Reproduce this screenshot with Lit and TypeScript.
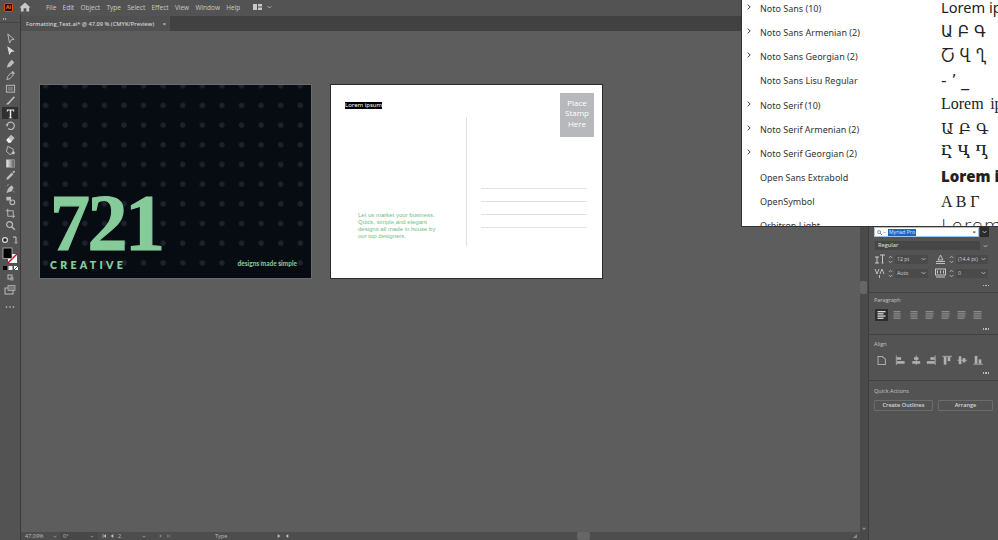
import { LitElement, html, css, svg } from "lit";
import { customElement } from "lit/decorators.js";

const MENUS = ["File", "Edit", "Object", "Type", "Select", "Effect", "View", "Window", "Help"];

const g = "#bdbdbd";
const TOOLS: unknown[] = [
  svg`<path d="M3 1l7 6-3.200.4L5 11z" fill="none" stroke="${g}" stroke-width="1"/>`,
  svg`<path d="M2.500 1l8 6.200-3.600.3L4.600 11z" fill="#d8d8d8"/>`,
  svg`<path d="M2 10.500l1.200-4 4-4.500 3 2.800-4.200 4.600z" fill="${g}"/>`,
  svg`<path d="M2 10.500l1-3.500 3.500-4 2.600 2.400-3.600 4z" fill="none" stroke="${g}"/><path d="M7 2.400l1.400-1.200 2.400 2.300-1.400 1.300z" fill="${g}"/>`,
  svg`<rect x="1.500" y="2.500" width="9" height="7.500" fill="none" stroke="${g}" stroke-width="1"/><rect x="3" y="4" width="6" height="4.500" fill="#767676"/>`,
  svg`<path d="M1.500 10.500c.3-1.600 1-2 1.800-2.300L9.600 1.400l1.200 1.100-6.200 7c-.6.7-1.600 1-3.100 1z" fill="${g}"/>`,
  svg`<path d="M2 1.500h8v2.600h-.7c-.2-1-.6-1.400-1.600-1.400H6.800v7.100c0 .6.3.8 1.200.8v.7H4v-.7c.9 0 1.200-.2 1.200-.8V2.700H4.300c-1 0-1.400.4-1.600 1.400H2z" fill="#e8e8e8"/>`,
  svg`<path d="M2.200 6a4 4 0 1 1 1.300 3.300" fill="none" stroke="${g}" stroke-width="1.200"/><path d="M.6 4.800l3.200.2-1.500 2.400z" fill="${g}"/>`,
  svg`<path d="M1.500 7.500l5-5.500 4 3.400-4.600 5.100H3.800z" fill="${g}"/><path d="M1.500 7.500l2.300 3h2.100l1.400-1.500L3.500 5.300z" fill="#efefef"/>`,
  svg`<path d="M3 1.500l6 3v4l-3.500 2L1.500 7z" fill="none" stroke="${g}"/><circle cx="9" cy="8.500" r="1.800" fill="${g}"/>`,
  svg`<defs><linearGradient id="gr"><stop offset="0" stop-color="#eee"/><stop offset="1" stop-color="#555"/></linearGradient></defs><rect x="1.500" y="2" width="9" height="8" fill="url(#gr)" stroke="${g}" stroke-width=".6"/>`,
  svg`<path d="M1.500 10.500l.5-2.300L7.400 2.800l1.800 1.800-5.400 5.400zM8 1.900l1-.9c.5-.3 1-.2 1.400.2s.5 1 .1 1.400l-.9 1z" fill="${g}"/>`,
  svg`<path d="M2 10.500c1-3.500 2.500-6 5-7.500l2 2-2 4-3 .5zM2 3l2-1.500M9 9l1.500 1" fill="${g}" stroke="${g}" stroke-width=".7"/>`,
  svg`<rect x="1.500" y="2" width="5" height="4" fill="${g}"/><circle cx="8" cy="8" r="2.600" fill="none" stroke="${g}" stroke-width="1.200"/><path d="M5 5l2 2" stroke="${g}"/>`,
  svg`<path d="M3 .8V9h8M.8 3H9v8" fill="none" stroke="${g}" stroke-width="1"/>`,
  svg`<circle cx="5" cy="5" r="3.200" fill="none" stroke="${g}" stroke-width="1.300"/><path d="M7.300 7.300l3.400 3.400" stroke="${g}" stroke-width="1.500"/>`,
];

const FONTS = [
  { n: "Noto Sans (10)", c: true, p: "Lorem ipsum", k: "nt up" },
  { n: "Noto Sans Armenian (2)", c: true, p: "Ա Բ Գ", k: "ns" },
  { n: "Noto Sans Georgian (2)", c: true, p: "Ⴀ Ⴁ Ⴂ", k: "ns" },
  { n: "Noto Sans Lisu Regular", c: false, p: "- ’ _", k: "ns" },
  { n: "Noto Serif (10)", c: true, p: "Lorem ipsum", k: "ls up wide" },
  { n: "Noto Serif Armenian (2)", c: true, p: "Ա Բ Գ", k: "se" },
  { n: "Noto Serif Georgian (2)", c: true, p: "Ⴀ Ⴁ Ⴂ", k: "se" },
  { n: "Open Sans Extrabold", c: false, p: "Lorem ipsum", k: "xb up" },
  { n: "OpenSymbol", c: false, p: "Α Β Γ", k: "ls" },
  { n: "Orbitron Light", c: false, p: "Lorem ipsum", k: "or" },
];

const p = "#b0b0b0";
const PARA = [
  [0, 0, 0, 0], [1, 1, 1, 1], [1, 1, 1, 1], [0, 0, 0, 1], [0, 0, 0, 1], [0, 0, 0, 1], [0, 0, 0, 0],
];
const ALIGN = [
  svg`<path d="M1.500 .5v11" stroke="${p}"/><rect x="2" y="2.500" width="5" height="3" fill="${p}"/><rect x="2" y="7" width="9" height="3" fill="${p}"/>`,
  svg`<path d="M6 .5v11" stroke="${p}"/><rect x="3.500" y="2.500" width="5" height="3" fill="${p}"/><rect x="1.500" y="7" width="9" height="3" fill="${p}"/>`,
  svg`<path d="M10.500 .5v11" stroke="${p}"/><rect x="5" y="2.500" width="5" height="3" fill="${p}"/><rect x="1" y="7" width="9" height="3" fill="${p}"/>`,
  svg`<path d="M.5 1.500h11" stroke="${p}"/><rect x="2" y="2" width="3" height="9" fill="${p}"/><rect x="6.500" y="2" width="3" height="5" fill="${p}"/>`,
  svg`<path d="M.5 6h11" stroke="${p}"/><rect x="2" y="1.500" width="3" height="9" fill="${p}"/><rect x="6.500" y="3.500" width="3" height="5" fill="${p}"/>`,
  svg`<path d="M.5 10.500h11" stroke="${p}"/><rect x="2" y="1" width="3" height="9" fill="${p}"/><rect x="6.500" y="5" width="3" height="5" fill="${p}"/>`,
];

const chev = html`<svg class="chev" viewBox="0 0 8 5"><path d="M1 1l3 3 3-3" fill="none" stroke="currentColor" stroke-width="1.200"/></svg>`;
const spin = html`<svg class="spin" viewBox="0 0 5 9"><path d="M.8 3L2.500 1.200 4.200 3M.8 6l1.700 1.800L4.200 6" fill="none" stroke="#bdbdbd" stroke-width=".8"/></svg>`;
const tri = (d: string, c = "#bdbdbd") => html`<svg class="tri" viewBox="0 0 6 6"><path d="${d}" fill="${c}"/></svg>`;

@customElement("app-root")
export class AppRoot extends LitElement {
  static styles = css`
    :host {
      display: block;
      position: relative;
      width: 998px;
      height: 540px;
      overflow: hidden;
      background: #5d5d5d;
      font-family: "Open Sans", "Noto Sans", sans-serif;
      color: #cfcfcf;
    }
    .menubar {
      height: 14px;
      background: #535353;
      display: flex;
      align-items: center;
      font-size: 6.500px;
      color: #c9c9c9;
    }
    .ai {
      width: 7px;
      height: 7px;
      margin-left: 4px;
      background: #2c0a02;
      border: 1px solid #e2461a;
      border-radius: 1px;
      color: #ff7a3c;
      font-size: 5px;
      line-height: 7px;
      text-align: center;
      font-weight: 700;
    }
    .home { width: 12px; height: 10px; margin-left: 6px; }
    .menus { display: flex; gap: 6.300px; margin-left: 15px; }
    .workspace { display: flex; align-items: center; gap: 5px; margin-left: 13px; }
    .workspace .wsicon { width: 9px; height: 6px; display: block; }
    .workspace .chev { width: 5px; height: 4px; }
    .main { display: flex; height: 526px; }
    .toolbar {
      width: 20px;
      flex: none;
      background: #535353;
      border-right: 1px solid #3a3a3a;
      display: flex;
      flex-direction: column;
      align-items: center;
    }
    .grip { width: 100%; border-bottom: 1px solid #444; display: flex; gap: 1px; padding: 4px 0 0 3px; box-sizing: border-box; height: 9px; }
    .grip i { width: 1px; height: 2px; background: #aaa; display: block; }
    .tools { display: flex; flex-direction: column; margin-top: 8.750px; align-items: center; }
    .tool {
      width: 14px;
      height: 12.500px;
      display: flex;
      align-items: center;
      justify-content: center;
    }
    .tool.on { background: #2f2f2f; width: 16px; }
    .tool svg { width: 11px; height: 11px; }
    .swatches { width: 20px; height: 80px; display: block; }
    .stack { flex: 1; display: flex; flex-direction: column; min-width: 0; }
    .tabbar { height: 17px; background: #414141; border-top: 2px solid #535353; display: flex; box-sizing: border-box; }
    .tab {
      width: 149px;
      background: #505050;
      font-size: 5.700px;
      font-weight: 600;
      color: #d0d0d0;
      display: flex;
      align-items: center;
      justify-content: space-between;
      padding: 0 4px 0 5px;
      box-sizing: border-box;
      white-space: nowrap;
    }
    .canvas-row { flex: 1; display: flex; min-height: 0; }
    .canvas-col { flex: 1; display: flex; flex-direction: column; min-width: 0; }
    .canvas {
      flex: 1;
      background: #5d5d5d;
      display: flex;
      align-items: flex-start;
      gap: 18px;
      padding: 53px 0 0 18px;
      box-sizing: border-box;
    }
    .artboard {
      position: relative;
      width: 273px;
      height: 195px;
      flex: none;
      border: 1px solid #2b2b2b;
      box-sizing: border-box;
      overflow: hidden;
    }
    .dark {
      background-color: #070c13;
      background-image: radial-gradient(circle, #1c232c 0, #1c232c 2.200px, transparent 3.200px);
      background-size: 19.600px 19.700px;
      background-position: -4.200px -9.150px;
      border-color: #6b6b6b;
    }
    .big {
      position: absolute;
      left: 10px;
      top: 108px;
      font: 700 80px/60px "Liberation Serif", serif;
      letter-spacing: -2.500px;
      color: #86cc9a;
      -webkit-text-stroke: 1.200px #86cc9a;
    }
    .creative {
      position: absolute;
      left: 10px;
      top: 174.500px;
      font: 800 10.500px/10px Lato, sans-serif;
      letter-spacing: 3.300px;
      color: #86cc9a;
    }
    .slogan {
      position: absolute;
      right: 14px;
      top: 176px;
      font: 700 6.500px/1 Lato, sans-serif;
      color: #86cc9a;
    }
    .white { background: #fff; }
    .lorem {
      position: absolute;
      left: 14px;
      top: 17px;
      background: #000;
      color: #fff;
      font: 6px/7px "Noto Sans", sans-serif;
      white-space: nowrap;
    }
    .stamp {
      position: absolute;
      left: 229px;
      top: 8px;
      width: 34px;
      height: 44px;
      background: #b7b8bb;
      color: #fff;
      font: 8px/10.500px "Open Sans", sans-serif;
      text-align: center;
      padding-top: 4.500px;
      box-sizing: border-box;
    }
    .vline { position: absolute; left: 135px; top: 32px; height: 129px; width: 1px; background: #e0e0e0; }
    .hline { position: absolute; left: 150px; width: 106px; height: 1px; background: #e2e2e2; }
    .promo {
      position: absolute;
      left: 27px;
      top: 126.500px;
      font: 6px/7.300px "Liberation Sans", sans-serif;
      color: #6fbd87;
      white-space: nowrap;
    }
    .vscroll { width: 8px; flex: none; background: #4a4a4a; position: relative; display: flex; flex-direction: column; justify-content: flex-end; align-items: center; padding-bottom: 9px; box-sizing: border-box; }
    .thumb { position: absolute; left: 0; top: 250px; width: 7px; height: 13px; background: #666; border-radius: 2px; }
    .tri { width: 4px; height: 4px; flex: none; display: block; }
    .statusbar {
      height: 8px;
      background: #4d4d4d;
      display: flex;
      align-items: center;
      font-size: 5.500px;
      line-height: 7px;
      color: #bdbdbd;
      overflow: hidden;
    }
    .statusbar .st { display: flex; align-items: center; height: 8px; box-sizing: border-box; flex: none; }
    .statusbar .chev { width: 4px; height: 3px; }
    .st-zoom { width: 32px; margin-left: 4px; justify-content: space-between; }
    .st-rot { width: 38px; margin-left: 3px; justify-content: space-between; background: #474747; padding: 0 4px 0 3px; }
    .st-art { width: 52px; margin-left: 3px; gap: 4px; padding-left: 1px; }
    .st-art .chev { margin-left: 17px; }
    .st-next { width: 24px; gap: 4px; padding-left: 6px; }
    .st-tool { width: 62px; margin-left: 38px; }
    .st-arr { gap: 4px; width: 20px; }
    .hthumb { width: 13px; height: 8px; background: #666; border-radius: 2px; margin-left: 280px; flex: none; }
    .corner { margin-left: auto; margin-right: 3px; }
    .panel {
      width: 130px;
      flex: none;
      background: #535353;
      border-left: 1px solid #3d3d3d;
      box-sizing: border-box;
      padding-top: 213px;
      font-size: 5.500px;
    }
    .searchrow { display: flex; align-items: center; gap: 1px; padding-left: 5px; height: 10px; }
    .search {
      width: 105px;
      height: 10px;
      background: #fff;
      display: flex;
      align-items: center;
      color: #555;
      border: 1px solid #9fc4e8;
      box-sizing: border-box;
      padding: 0 2px;
    }
    .search .mg { width: 5px; height: 5px; flex: none; }
    .search .chev { width: 3px; height: 3px; color: #555; margin: 0 1px; flex: none; }
    .sel { background: #1f62c4; color: #dfe9f7; font-size: 5.100px; line-height: 7px; padding: 0 1px; margin-left: 1px; }
    .x { margin-left: auto; font-size: 6px; font-weight: 700; color: #444; line-height: 7px; }
    .drop {
      width: 9px;
      height: 10px;
      background: #2c2c2c;
      color: #ddd;
      display: flex;
      align-items: center;
      justify-content: center;
    }
    .drop .chev, .style .chev, .fld .chev { width: 5px; height: 4px; flex: none; }
    .style { display: flex; align-items: center; margin: 4px 0 0 6px; gap: 3px; }
    .style .f {
      width: 105px;
      height: 9px;
      background: #464646;
      font-size: 5.500px;
      line-height: 9px;
      padding-left: 3px;
      box-sizing: border-box;
      font-weight: 600;
    }
    .metrics {
      display: grid;
      grid-template-columns: 54px 53px;
      column-gap: 7px;
      row-gap: 4px;
      margin: 4px 0 0 5px;
    }
    .m { display: flex; align-items: center; height: 10px; }
    .m .gl { width: 11px; height: 10px; flex: none; }
    .spin { width: 5px; height: 9px; flex: none; margin: 0 2px 0 3px; }
    .fld {
      flex: 1;
      height: 9px;
      background: #4a4a4a;
      display: flex;
      align-items: center;
      justify-content: space-between;
      padding: 0 2px;
      box-sizing: border-box;
      font-size: 5.200px;
      white-space: nowrap;
    }
    .more {
      display: flex;
      justify-content: flex-end;
      padding-right: 9px;
      height: 5px;
      gap: 1px;
      align-items: center;
    }
    .more i { width: 1.500px; height: 1.500px; background: #bbb; display: block; }
    .m5 { margin-top: 5px; }
    .sect { border-top: 1px solid #414141; padding-left: 5px; box-sizing: border-box; }
    .sect h4 { margin: 0; font-size: 5.500px; font-weight: 400; color: #c4c4c4; line-height: 7px; }
    .s-para { margin-top: 4px; height: 42px; padding-top: 3.500px; }
    .s-para .row { margin: 5.500px 0 5.500px 1px; }
    .s-align { height: 46px; padding-top: 5.500px; }
    .s-align .row { margin: 6.500px 0 4.500px 3px; }
    .s-quick { padding-top: 6.500px; }
    .row { display: flex; align-items: center; height: 12px; }
    .pbtn { width: 13px; height: 12px; display: flex; align-items: center; justify-content: center; margin-right: 3px; flex: none; }
    .pbtn.on { background: #2e2e2e; }
    .pbtn svg { width: 9px; height: 8px; }
    .abtn { width: 10.500px; height: 10.500px; margin-right: 5.100px; flex: none; }
    .afirst { margin-right: 7.500px; }
    .btns { display: flex; gap: 5px; margin-top: 5.500px; }
    .btn {
      height: 11px;
      border: 1px solid #6c6c6c;
      border-radius: 1px;
      box-sizing: border-box;
      font-size: 5.600px;
      line-height: 9px;
      text-align: center;
      font-weight: 600;
      color: #d5d5d5;
    }
    .b1 { width: 59px; }
    .b2 { width: 55px; }
    .fontlist {
      position: absolute;
      left: 741px;
      top: 0;
      width: 257px;
      height: 227px;
      background: #fff;
      border-left: 1px solid #333;
      border-bottom: 1px solid #333;
      box-sizing: border-box;
      overflow: hidden;
      color: #222;
    }
    .fr {
      display: grid;
      grid-template-columns: 18px 181px 1fr;
      height: 24.200px;
      align-items: center;
      white-space: nowrap;
    }
    .list { margin-top: -3.800px; }
    .arrow { width: 4px; height: 6px; margin: -3px 0 0 5px; }
    .fname { font: 9px/1 "Noto Sans", sans-serif; color: #333; }
    .prev { font-size: 15.500px; line-height: 24px; overflow: hidden; color: #222; }
    .up { margin-top: -3px; }
    .wide { word-spacing: 2.500px; }
    .nt { font-family: "Noto Sans", sans-serif; font-size: 14.600px; }
    .ns { font-family: "DejaVu Sans", sans-serif; }
    .se { font-family: "DejaVu Serif", serif; }
    .ls { font-family: "Liberation Serif", serif; font-size: 16px; }
    .xb { font-family: "Open Sans", sans-serif; font-weight: 800; font-size: 15px; }
    .or { font-family: "DejaVu Sans", sans-serif; font-weight: 300; font-size: 18px; letter-spacing: 1px; }
  `;

  private more() {
    return html`<div class="more"><i></i><i></i><i></i></div>`;
  }

  render() {
    return html`
      <div class="menubar">
        <div class="ai">Ai</div>
        <svg class="home" viewBox="0 0 13 11"><path d="M6.500 .5L12.500 6H11v4.500H8V7H5v3.500H2V6H.5z" fill="#c8c8c8"/></svg>
        <div class="menus">${MENUS.map((m) => html`<span>${m}</span>`)}</div>
        <div class="workspace">
          <svg class="wsicon" viewBox="0 0 9 6"><rect width="4" height="6" fill="#c8c8c8"/><rect x="5" width="4" height="2.500" fill="#c8c8c8"/><rect x="5" y="3.500" width="4" height="2.500" fill="#c8c8c8"/></svg>
          ${chev}
        </div>
      </div>
      <div class="main">
        <div class="toolbar">
          <div class="grip"><i></i><i></i></div>
          <div class="tools">
            ${TOOLS.map(
              (ic, i) => html`<div class="tool ${i === 6 ? "on" : ""}"><svg viewBox="0 0 12 12">${ic}</svg></div>`,
            )}
          </div>
          <svg class="swatches" viewBox="0 0 20 80">
            <circle cx="5" cy="8" r="3" fill="#ddd"/><circle cx="5" cy="8" r="1.800" fill="#222"/>
            <path d="M13 5h3v5M14.500 10l1.500 1.500L17.500 10" fill="none" stroke="#ccc" stroke-width="1"/>
            <rect x="8" y="22" width="9" height="9" fill="#fff"/><path d="M8 31l9-9" stroke="#c3122a" stroke-width="1.500"/>
            <rect x="3" y="16" width="9" height="10.500" fill="#000" stroke="#bbb" stroke-width=".8"/>
            <rect x="3" y="34" width="4" height="4" fill="#000"/><rect x="8.500" y="34" width="4" height="4" fill="#eee"/>
            <rect x="14" y="34" width="4" height="4" fill="#fff"/><path d="M14 38l4-4" stroke="#c3122a"/>
            <rect x="8" y="43" width="4" height="4" fill="none" stroke="#bbb"/><rect x="10" y="45" width="3.500" height="3.500" fill="#999"/>
            <rect x="5" y="56" width="8" height="6" fill="none" stroke="#bbb"/><rect x="8" y="53.500" width="7" height="5" fill="#777" stroke="#bbb" stroke-width=".7"/>
            <circle cx="6.500" cy="75" r=".8" fill="#ccc"/><circle cx="10" cy="75" r=".8" fill="#ccc"/><circle cx="13.500" cy="75" r=".8" fill="#ccc"/>
          </svg>
        </div>
        <div class="stack">
          <div class="tabbar">
            <div class="tab"><span>Formatting_Text.ai* @ 47.09 % (CMYK/Preview)</span><span>×</span></div>
          </div>
          <div class="canvas-row">
            <div class="canvas-col">
              <div class="canvas">
                <div class="artboard dark">
                  <div class="big">721</div>
                  <div class="creative">CREATIVE</div>
                  <div class="slogan">designs made simple</div>
                </div>
                <div class="artboard white">
                  <div class="lorem">Lorem ipsum</div>
                  <div class="stamp">Place<br />Stamp<br />Here</div>
                  <div class="vline"></div>
                  <div class="hline" style="top:103px"></div>
                  <div class="hline" style="top:116px"></div>
                  <div class="hline" style="top:129px"></div>
                  <div class="hline" style="top:142px"></div>
                  <div class="promo">Let us market your business.<br />Quick, simple,and elegant<br />designs all made in house by<br />our top designers.</div>
                </div>
              </div>
              <div class="statusbar">
                <div class="st st-zoom"><span>47.09%</span>${chev}</div>
                <div class="st st-rot"><span>0°</span>${chev}</div>
                <div class="st st-art">${tri("M1 0h1v6H1zM6 0v6L2.500 3z")}${tri("M5 0v6L1 3z")}<span>2</span>${chev}</div>
                <div class="st st-next">${tri("M1 0v6l4-3z", "#777")}${tri("M0 0v6l3.500-3zM4 0h1v6H4z", "#777")}</div>
                <div class="st st-tool"><span>Type</span></div>
                <div class="st st-arr">${tri("M1 0v6l4-3z")}${tri("M5 0v6L1 3z")}</div>
                <div class="hthumb"></div>
                <div class="corner">${tri("M6 0v6H0z", "#8a8a8a")}</div>
              </div>
            </div>
            <div class="vscroll"><div class="thumb"></div>${tri("M0 1h6L3 5z", "#8a8a8a")}</div>
          </div>
        </div>
        <div class="panel">
          <div class="searchrow">
            <div class="search">
              <svg class="mg" viewBox="0 0 6 6"><circle cx="2.500" cy="2.500" r="1.800" fill="none" stroke="#555" stroke-width=".8"/><path d="M4 4l2 2" stroke="#555"/></svg>
              ${chev}
              <span class="sel">Myriad Pro</span>
              <span class="x">×</span>
            </div>
            <div class="drop">${chev}</div>
          </div>
          <div class="style"><div class="f">Regular</div>${chev}</div>
          <div class="metrics">
            <div class="m">
              <svg class="gl" viewBox="0 0 11 10"><path d="M1 9h4M3 9V3M1 3h4M6 1h5M8.500 1v8M7.500 9h2" fill="none" stroke="#c8c8c8" stroke-width="1"/></svg>
              ${spin}<div class="fld"><span>12 pt</span>${chev}</div>
            </div>
            <div class="m">
              <svg class="gl" viewBox="0 0 11 10"><path d="M5.500 1L3 6h5zM1 9.500h9M1 7.500h9" fill="none" stroke="#c8c8c8" stroke-width=".9"/></svg>
              ${spin}<div class="fld"><span>(14.4 pt)</span>${chev}</div>
            </div>
            <div class="m">
              <svg class="gl" viewBox="0 0 11 10"><path d="M1 1l2 5 2-5M6 6l2-5 2 5M5.500 7v3" fill="none" stroke="#c8c8c8" stroke-width=".9"/></svg>
              ${spin}<div class="fld"><span>Auto</span>${chev}</div>
            </div>
            <div class="m">
              <svg class="gl" viewBox="0 0 11 10"><rect x=".5" y="1" width="10" height="6" fill="none" stroke="#c8c8c8"/><path d="M2.500 2.500v3M5.500 2.500v3M8.500 2.500v3M1 9h9" stroke="#c8c8c8"/></svg>
              ${spin}<div class="fld"><span>0</span>${chev}</div>
            </div>
          </div>
          <div class="m5">${this.more()}</div>
          <div class="sect s-para">
            <h4>Paragraph</h4>
            <div class="row">
              ${PARA.map(
                (r, i) => html`<div class="pbtn ${i === 0 ? "on" : ""}"><svg viewBox="0 0 8 8">
                  ${[0, 1, 2, 3].map(
                    (k) => svg`<rect x="${i === 2 ? 1 : 0}" y="${k * 2.2}" width="${i === 0 ? (k % 2 ? 6 : 8) : 8 - (r[k] ? 1 : 0)}" height="1.300" fill="${i === 0 ? "#dcdcdc" : "#8b8b8b"}"/>`,
                  )}
                </svg></div>`,
              )}
            </div>
            ${this.more()}
          </div>
          <div class="sect s-align">
            <h4>Align</h4>
            <div class="row">
              <svg class="abtn afirst" viewBox="0 0 10 10"><path d="M1 1.500h4l3 2.500v5H1z" fill="none" stroke="#aaa"/></svg>
              ${ALIGN.map((a) => html`<svg class="abtn" viewBox="0 0 12 12">${a}</svg>`)}
            </div>
            ${this.more()}
          </div>
          <div class="sect s-quick">
            <h4>Quick Actions</h4>
            <div class="btns">
              <div class="btn b1">Create Outlines</div>
              <div class="btn b2">Arrange</div>
            </div>
          </div>
        </div>
      </div>
      <div class="fontlist">
        <div class="list">
          ${FONTS.map(
            (f) => html`<div class="fr">
              ${f.c
                ? html`<svg class="arrow" viewBox="0 0 4 6"><path d="M.7 .7L3.200 3 .7 5.300" fill="none" stroke="#333" stroke-width=".9"/></svg>`
                : html`<span></span>`}
              <span class="fname">${f.n}</span>
              <span class="prev ${f.k}">${f.p}</span>
            </div>`,
          )}
        </div>
      </div>
    `;
  }
}
